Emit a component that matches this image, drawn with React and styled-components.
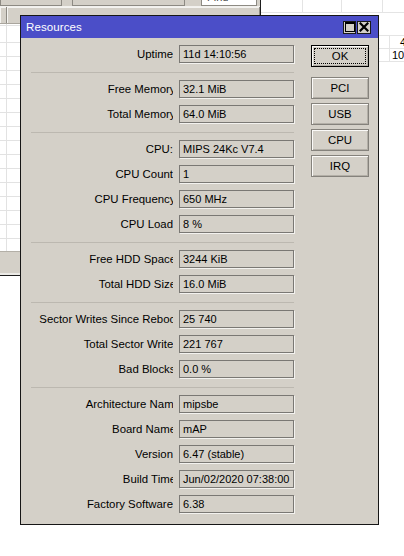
import React from 'react';
import styled, { createGlobalStyle, css } from 'styled-components';

const GlobalStyle = createGlobalStyle`
  html, body {
    margin: 0;
    padding: 0;
    background: #fff;
  }
  body {
    font-family: "Liberation Sans", Arial, sans-serif;
    color: #000;
  }
  *, ::before, ::after {
    box-sizing: border-box;
  }
`;

const Desktop = styled.div`
  position: relative;
  width: 404px;
  height: 556px;
  overflow: hidden;
  background: #fff;
`;

/* ---- window behind, on the left ---- */

const BackWindow = styled.div`
  position: absolute;
  left: 0;
  top: 0;
  width: 261px;
  height: 276px;
  display: flex;
  flex-direction: column;
  background: #d4d0c8;
  border-right: 1px solid #1e1e1e;
  border-bottom: 1px solid #1e1e1e;
`;

const Toolbar = styled.div`
  height: 7px;
  flex: none;
  display: flex;
  align-items: flex-end;
  overflow: hidden;
  border-bottom: 1px solid #f2f1ee;
`;

const ToolButton = styled.div`
  flex: none;
  width: ${p => p.$w}px;
  margin-left: ${p => p.$ml || 0}px;
  height: 22px;
  background: #d4d0c8;
  border: 1px solid #8d8a83;
  border-top: none;
`;

const FindBox = styled.div`
  flex: none;
  width: 56px;
  height: 20px;
  margin-left: 16px;
  background: #fff;
  border: 1px solid #8d8a83;
  display: flex;
  align-items: flex-end;
  padding: 0 0 2px 5px;
  font-size: 11px;
  line-height: 11px;
  color: #444;
`;

const HeaderRow = styled.div`
  height: 17px;
  flex: none;
  display: flex;
  border-bottom: 1px solid #a9a59d;
`;

const HeaderCell = styled.div`
  flex: ${p => (p.$w ? 'none' : '1')};
  width: ${p => (p.$w ? `${p.$w}px` : 'auto')};
  border-right: 1px solid #8d8a83;
  box-shadow: inset 1px 1px #f4f3f0;
`;

const Grid = styled.div`
  flex: 1;
  background-color: #fff;
  background-image:
    linear-gradient(to right, transparent 6px, #e2e2e2 6px, #e2e2e2 7px, transparent 7px),
    repeating-linear-gradient(to bottom, transparent 0, transparent 13px, #e2e2e2 13px, #e2e2e2 14px);
  background-position: 0 5px;
`;

const StatusBar = styled.div`
  height: 24px;
  flex: none;
  background: #d4d0c8;
  border-top: 1px solid #b3afa7;
  border-bottom: 2px solid #ecebe7;
`;

/* ---- table to the right ---- */

const SideTable = styled.div`
  position: absolute;
  left: 261px;
  top: 0;
  width: 143px;
  display: flex;
  flex-direction: column;
  font-size: 11px;
  line-height: 13px;
`;

const TRow = styled.div`
  display: flex;
  height: ${p => p.$h}px;
  border-bottom: 1px solid #e4e4e4;
`;

const TCell = styled.div`
  flex: none;
  width: ${p => p.$w}px;
  padding-left: ${p => p.$pl || 0}px;
  white-space: nowrap;
  overflow: hidden;
  ${p => p.$line && css`border-right: 1px solid #e4e4e4;`}
`;

/* ---- Resources dialog ---- */

const Dialog = styled.div`
  position: absolute;
  left: 20px;
  top: 15px;
  width: 359px;
  height: 510px;
  display: flex;
  flex-direction: column;
  background: #d4d0c8;
  border: 1px solid #161616;
`;

const TitleBar = styled.div`
  height: 22px;
  flex: none;
  display: flex;
  align-items: center;
  padding: 0 7px 0 5px;
  background: #4b4ec8;
  color: #fff;
`;

const Title = styled.div`
  flex: 1;
  font-size: 11.5px;
  letter-spacing: 0.1px;
`;

const TitleButton = styled.div`
  width: ${p => p.$w}px;
  height: 13px;
  margin-left: 1px;
  display: flex;
  align-items: center;
  justify-content: center;
  background: #d4d0c8;
  border: 1px solid #1a1a1a;
`;

const Body = styled.div`
  flex: 1;
  display: flex;
  gap: 17px;
  padding: 7px 9px 11px 9px;
`;

const Form = styled.div`
  display: flex;
  flex-direction: column;
  gap: 7px;
`;

const Row = styled.div`
  display: flex;
  align-items: center;
  gap: 6px;
  height: 18px;
`;

const Label = styled.div`
  width: 143px;
  display: flex;
  justify-content: flex-end;
  overflow: hidden;
`;

const LabelText = styled.span`
  flex: none;
  white-space: nowrap;
  font-size: 11.4px;
  margin-right: ${p => -(p.$cut || 0)}px;
`;

const Field = styled.div`
  width: 115px;
  height: 18px;
  display: flex;
  align-items: center;
  padding-left: 3px;
  border: 1px solid #7a7874;
  box-shadow: 1px 1px 0 #f3f2ef;
  font-size: 11px;
  white-space: nowrap;
  overflow: hidden;
`;

const Separator = styled.div`
  height: 1px;
  width: 263px;
  margin: 2px 0 0 1px;
  background: #bcb8b0;
`;

const Buttons = styled.div`
  display: flex;
  flex-direction: column;
  gap: 4px;
`;

const Button = styled.div`
  position: relative;
  width: 58px;
  height: 22px;
  display: flex;
  align-items: center;
  justify-content: center;
  font-size: 11.4px;
  background: #d4d0c8;
  border: 1px solid #85827c;
  box-shadow: inset 1px 1px #fbfaf8, inset -1px -1px #b3afa7;
  ${p => p.$default && css`
    border-color: #000;
    margin-bottom: 6px;
    &::after {
      content: '';
      position: absolute;
      inset: 2px;
      border: 1px dotted #000;
    }
  `}
`;

const groups = [
  [['Uptime', '11d 14:10:56']],
  [
    ['Free Memory', '32.1 MiB', 2.5],
    ['Total Memory', '64.0 MiB', 2.5],
  ],
  [
    ['CPU:', 'MIPS 24Kc V7.4'],
    ['CPU Count', '1'],
    ['CPU Frequency', '650 MHz', 2.5],
    ['CPU Load', '8 %'],
  ],
  [
    ['Free HDD Space', '3244 KiB', 3],
    ['Total HDD Size', '16.0 MiB', 3],
  ],
  [
    ['Sector Writes Since Reboot', '25 740', 6],
    ['Total Sector Writes', '221 767', 6],
    ['Bad Blocks', '0.0 %', 2.5],
  ],
  [
    ['Architecture Name', 'mipsbe', 7],
    ['Board Name', 'mAP', 3],
    ['Version', '6.47 (stable)'],
    ['Build Time', 'Jun/02/2020 07:38:00', 3],
    ['Factory Software', '6.38'],
  ],
];

function MaximizeIcon() {
  return (
    <svg width="10" height="10" viewBox="0 0 10 10">
      <rect x="0.5" y="0.5" width="9" height="9" fill="none" stroke="#000" strokeWidth="1" />
      <rect x="0" y="0" width="10" height="2" fill="#000" />
    </svg>
  );
}

function CloseIcon() {
  return (
    <svg width="10" height="10" viewBox="0 0 10 10">
      <path d="M1.5 1.5 L8.5 8.5 M8.5 1.5 L1.5 8.5" stroke="#000" strokeWidth="2.2" strokeLinecap="square" />
    </svg>
  );
}

export default function App() {
  return (
    <Desktop>
      <GlobalStyle />

      <BackWindow>
        <Toolbar>
          <ToolButton $w={62} />
          <ToolButton $w={113} $ml={10} />
          <FindBox>Find</FindBox>
        </Toolbar>
        <HeaderRow>
          <HeaderCell $w={7} />
          <HeaderCell />
        </HeaderRow>
        <Grid />
        <StatusBar />
      </BackWindow>

      <SideTable>
        <TRow $h={13}>
          <TCell $w={42} $line />
          <TCell $w={39} $line />
          <TCell $w={41} $line />
          <TCell $w={21} />
        </TRow>
        <TRow $h={23} />
        <TRow $h={13}>
          <TCell $w={129} $line />
          <TCell $w={14} $pl={10}>4</TCell>
        </TRow>
        <TRow $h={13}>
          <TCell $w={129} $line />
          <TCell $w={14} $pl={2}>10</TCell>
        </TRow>
      </SideTable>

      <Dialog>
        <TitleBar>
          <Title>Resources</Title>
          <TitleButton $w={13}><MaximizeIcon /></TitleButton>
          <TitleButton $w={14}><CloseIcon /></TitleButton>
        </TitleBar>
        <Body>
          <Form>
            {groups.map((rows, gi) => (
              <React.Fragment key={gi}>
                {gi > 0 && <Separator />}
                {rows.map(([label, value, cut]) => (
                  <Row key={label}>
                    <Label>
                      <LabelText $cut={cut}>{label}</LabelText>
                    </Label>
                    <Field>{value}</Field>
                  </Row>
                ))}
              </React.Fragment>
            ))}
          </Form>
          <Buttons>
            <Button $default>OK</Button>
            <Button>PCI</Button>
            <Button>USB</Button>
            <Button>CPU</Button>
            <Button>IRQ</Button>
          </Buttons>
        </Body>
      </Dialog>
    </Desktop>
  );
}
